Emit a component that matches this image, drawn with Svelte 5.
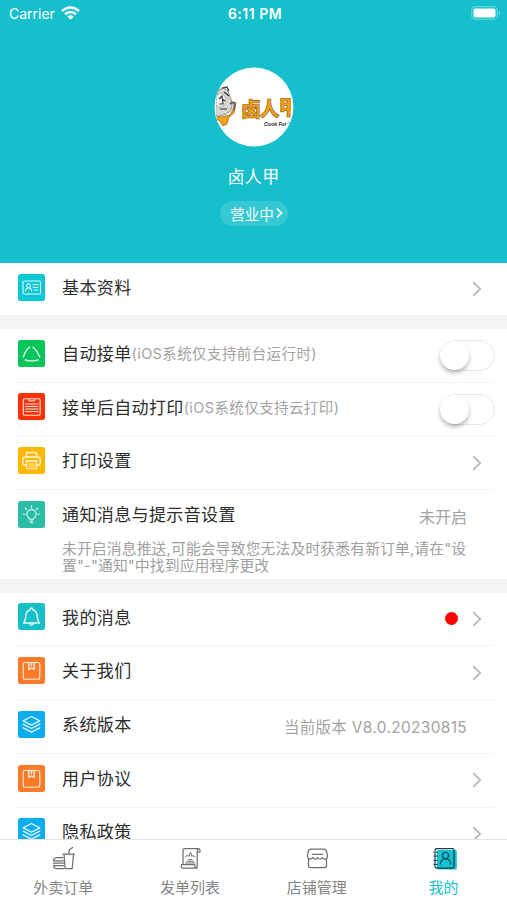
<!--
  Profile page of the merchant app: shop header, settings list, tab bar.
-->

<script lang="ts">
  type Row = {
    icon: string;
    color: string;
    label: string;
    note?: string;
    value?: string;
    desc?: string;
    dot?: boolean;
    toggle?: boolean;
    arrow?: boolean;
  };

  const groups: Row[][] = [
    [{ icon: 'card', color: '#08c8d5', label: '基本资料', arrow: true }],
    [
      { icon: 'triangle', color: '#05c45a', label: '自动接单', note: '(iOS系统仅支持前台运行时)', toggle: true },
      { icon: 'receipt', color: '#fb3203', label: '接单后自动打印', note: '(iOS系统仅支持云打印)', toggle: true },
      { icon: 'printer', color: '#ffb800', label: '打印设置', arrow: true },
      {
        icon: 'bulb',
        color: '#2bbda5',
        label: '通知消息与提示音设置',
        value: '未开启',
        desc: '未开启消息推送,可能会导致您无法及时获悉有新订单,请在"设置"-"通知"中找到应用程序更改',
      },
    ],
    [
      { icon: 'bell', color: '#17c0c8', label: '我的消息', dot: true, arrow: true },
      { icon: 'book', color: '#fd7a28', label: '关于我们', arrow: true },
      { icon: 'layers', color: '#0aaef0', label: '系统版本', value: '当前版本 V8.0.20230815' },
      { icon: 'book', color: '#fd7a28', label: '用户协议', arrow: true },
      { icon: 'layers', color: '#0aaef0', label: '隐私政策', arrow: true },
    ],
  ];

  const tabs = [
    { icon: 'food', label: '外卖订单' },
    { icon: 'list', label: '发单列表' },
    { icon: 'shop', label: '店铺管理' },
    { icon: 'mine', label: '我的', active: true },
  ];

  let switches = $state<Record<string, boolean>>({});
</script>

<div class="page">
  <header class="hero">
    <div class="status">
      <div class="carrier">
        <span>Carrier</span>
        <svg width="19" height="14" viewBox="0 0 19 14" fill="none" stroke="#fff" stroke-width="2.5">
          <path d="M1 5Q9.500-2 18 5M4 8.300Q9.500 3.800 15 8.300" />
          <path d="M9.500 13.800L6.300 10.600Q9.500 8 12.700 10.600Z" fill="#fff" stroke="none" />
        </svg>
      </div>
      <span class="clock">6:11 PM</span>
      <div class="battery-wrap">
        <svg width="30" height="14" viewBox="0 0 30 14">
          <rect x="0.700" y="0.700" width="25.600" height="12.600" rx="3.800" fill="none" stroke="#5fd6de" stroke-width="1.200" />
          <rect x="2.500" y="2.500" width="22" height="9" rx="2" fill="#fff" />
          <path d="M28 5Q30 7 28 9Z" fill="#7adfe5" />
        </svg>
      </div>
    </div>

    <svg class="avatar" width="80" height="80" viewBox="0 0 80 80">
      <defs>
        <clipPath id="round"><rect x="2.500" y="2" width="74.500" height="76" rx="30" /></clipPath>
      </defs>
      <circle cx="40" cy="40" r="39.500" fill="#fff" />
      <g clip-path="url(#round)">
        <path d="M2 48L7 50 16 48 20 40 22 35 20 46 15 50 13 57 9 59 6 54 2 52Z" fill="#f3a318" stroke="#8a5b20" stroke-width="0.700" />
        <path d="M3 25Q9 18 14 24L18 35Q19 44 12 47L2 50Z" fill="#d6d5d2" stroke="#77736f" stroke-width="0.800" />
        <path d="M3 28L8 26 12 31 11 38 6 40 2 38Z" fill="#f8f8f6" stroke="#888" stroke-width="0.500" />
        <path d="M5 32L8 29 9 37 5 37M8 32L11 34M8 21L13 20 15 24M10 25L15 29M6 42L13 42" fill="none" stroke="#333" stroke-width="1.200" />
        <path d="M16 37Q22 32 20 43" fill="none" stroke="#6e635b" stroke-width="2" />
        <g class="logo-text">
          <text x="27" y="49.500" font-size="20">卤</text>
          <text x="45.500" y="49.500" font-size="20">人</text>
          <text x="64.500" y="47.500" font-size="20">甲</text>
        </g>
        <text class="logo-sub" x="50" y="58.500">Cook For ™</text>
      </g>
    </svg>

    <div class="shop-name">卤人甲</div>
    <button class="shop-state">
      <span>营业中</span>
      <svg width="7" height="12" viewBox="0 0 7 12" fill="none" stroke="#fff" stroke-width="1.700">
        <path d="M1 1.500L5.500 6 1 10.500" />
      </svg>
    </button>
  </header>

  <main class="list">
    {#each groups as rows, g (g)}
      <section class="group">
        {#each rows as row (row.label)}
          <div class="row" class:tall={row.desc}>
            <span class="tile" style="background: {row.color}">
              <svg width="27" height="27" viewBox="0 0 27 27" class="glyph">
                {#if row.icon === 'card'}
                  <rect x="5" y="7" width="17.500" height="13" rx="1.500" />
                  <circle cx="10.500" cy="11.800" r="1.900" />
                  <path d="M7.300 17Q7.600 14 10.500 14T13.700 17M15 10.500H20M15 13.300H20M16 16H20" />
                {:else if row.icon === 'triangle'}
                  <path d="M11.500 7Q7.500 10.500 5.300 17M15 7Q19.500 11 21.800 17M7.300 20Q13.500 21.800 20 20" class="bold" />
                {:else if row.icon === 'receipt'}
                  <rect x="5.300" y="5.800" width="16.800" height="16.400" rx="1.200" />
                  <path d="M11 6V7.800H16.500V6M7.500 11H20M7.500 13.500H20M7.500 16H20M7.500 18.500H20" />
                {:else if row.icon === 'printer'}
                  <path d="M8.500 10V6.500Q8.500 5.500 9.500 5.500H17.500Q18.500 5.500 18.500 6.500V10M8.500 18H7Q4.800 18 4.800 16V12.500Q4.800 10 7.500 10H19.500Q22.200 10 22.200 12.500V16Q22.200 18 20 18H18.500M8 14H19" class="bold" />
                  <path d="M8.700 14V21.800H18.300V14M11 17H16M11 19.300H16" />
                {:else if row.icon === 'bulb'}
                  <path d="M11.500 18.300Q11.500 17.400 10 16A4.500 4.500 0 1 1 17 16Q15.500 17.400 15.500 18.300ZM12 20H15M12.300 21.700H14.700" />
                  <path d="M13.500 4.800V6.500M7.200 7.200L8.500 8.500M19.800 7.200L18.500 8.500M5 13.300H7M20 13.300H22" />
                {:else if row.icon === 'bell'}
                  <path d="M5.500 20Q7.500 18 7.800 13.500Q8 8 12 7Q12 5 13.500 5T15 7Q19 8 19.200 13.500Q19.500 18 21.500 20ZM11.500 20.500Q13.500 24 15.500 20.500" class="bold" />
                {:else if row.icon === 'book'}
                  <rect x="5.200" y="5.500" width="16.600" height="16.700" rx="2" />
                  <path d="M10.800 5.500V12.500L13.500 11 16.200 12.500V5.500M13.500 6V8.500" class="bold" />
                {:else}
                  <path d="M13.500 5.500L21.800 9.800 13.500 14.100 5.200 9.800Z" class="bold" />
                  <path d="M5.200 13.200L13.500 17.500 21.800 13.200M5.200 16.800L13.500 21.100 21.800 16.800" class="bold" />
                {/if}
              </svg>
            </span>

            <div class="body">
              <div class="line">
                <span class="label">{row.label}</span>
                {#if row.note}<span class="note">{row.note}</span>{/if}
                <span class="spacer"></span>
                {#if row.value}<span class="value" class:version={row.icon === 'layers'}>{row.value}</span>{/if}
                {#if row.dot}<span class="dot"></span>{/if}
                {#if row.toggle}
                  <button
                    class="switch"
                    class:on={switches[row.label]}
                    role="switch"
                    aria-checked={!!switches[row.label]}
                    aria-label={row.label}
                    onclick={() => (switches[row.label] = !switches[row.label])}
                  >
                    <span class="knob"></span>
                  </button>
                {/if}
                {#if row.arrow}
                  <svg class="arrow" width="10" height="16" viewBox="0 0 10 16" fill="none" stroke="#bdbdbd" stroke-width="1.900">
                    <path d="M1.300 1.300L8.200 8 1.300 14.700" />
                  </svg>
                {/if}
              </div>
              {#if row.desc}<p class="desc">{row.desc}</p>{/if}
            </div>
          </div>
        {/each}
      </section>
    {/each}
  </main>

  <nav class="tabs">
    {#each tabs as tab (tab.icon)}
      <div class="tab" class:active={tab.active}>
        <svg width="24" height="24" viewBox="0 0 24 24" class="tab-icon">
          {#if tab.icon === 'food'}
            <path d="M12 8H23.500M13 8L14.200 22.500H21.200L22.500 8M17.500 8L18.500 3.800 21.500 1.500" />
            <path d="M12 11.500H5.500Q2.500 12 2.500 14.800H12.500M2.500 17.200H12.800M2.500 19.600H12.800M2.800 19.800Q2.800 22.500 5 22.500H13" />
          {:else if tab.icon === 'list'}
            <path d="M5 18.500V4Q5 2.700 6.500 2.700H21Q19.200 3 19.200 5V19.500M19.200 6H22V4.500Q22 2.700 20.500 2.700M3.500 18.700H16.800Q16.500 22 19.300 22H5Q2.500 22 3.500 18.700ZM19.200 18V20Q19.200 22 18 22" />
            <path d="M7.500 10.500L9.500 9 11 10.500 12.500 6 14 10.500 15 9.500 17 11M10.500 13.500H14M9 15.300H15.500M7.500 17H16.500" stroke-width="1" />
          {:else if tab.icon === 'shop'}
            <path d="M5.800 3.200H19Q21 3.200 21.700 6L22.500 10Q22.500 13 20 13T17.300 11.500Q16 13.500 14.500 13T12.500 11.500Q11 13.500 9.800 13T7.500 11.500Q6.500 13 4.900 13T2.300 10L3.100 6Q3.800 3.200 5.800 3.200ZM3.500 13V19.500Q3.500 21.500 5.500 21.500H19.500Q21.500 21.500 21.500 19.500V13M7.500 8.300H17.500" />
          {:else}
            <rect x="5" y="4" width="19.800" height="19.500" rx="1.500" fill="#14c1d0" stroke="none" />
            <path d="M3 4.500V3.700Q3 2.500 4.500 2.500H20.500Q22 2.500 22 4V20.500Q22 22 20.500 22H4.500Q3 22 3 20.800V19.500M3 7.500V9M3 11.500V13M3 15.500V17M2 6H5M2 10.200H5M2 14.300H5M2 18.300H5" stroke="#173d50" />
            <circle cx="13.500" cy="9.500" r="3.100" stroke="#14566a" />
            <path d="M8.300 18Q8.700 13 13.500 12.800Q18.300 13 18.700 18" stroke="#14566a" />
          {/if}
        </svg>
        <span>{tab.label}</span>
      </div>
    {/each}
  </nav>
</div>

<style>
  :global(body) {
    margin: 0;
  }
  .page {
    display: flex;
    flex-direction: column;
    width: 507px;
    height: 900px;
    overflow: hidden;
    background: #fff;
    font-family: Inter, 'Noto Sans CJK SC', sans-serif;
  }
  button {
    border: none;
    padding: 0;
    font-family: inherit;
  }

  .hero {
    display: flex;
    flex-direction: column;
    align-items: center;
    flex-shrink: 0;
    height: 263px;
    background: #16bfcc;
    color: #fff;
  }
  .status {
    display: grid;
    grid-template-columns: 1fr auto 1fr;
    align-items: center;
    box-sizing: border-box;
    width: 100%;
    height: 27px;
    padding: 0 6px 0 9px;
    font-size: 14px;
  }
  .carrier {
    display: flex;
    align-items: center;
    gap: 6px;
  }
  .carrier svg {
    margin-bottom: 1px;
  }
  .clock {
    font-size: 14px;
    font-weight: 600;
    letter-spacing: 0.5px;
  }
  .battery-wrap {
    display: flex;
    justify-content: flex-end;
    padding-bottom: 1px;
  }
  .avatar {
    margin-top: 40px;
  }
  .logo-text {
    font-family: 'Noto Sans CJK SC', sans-serif;
    font-weight: 900;
    fill: #f59f12;
    stroke: #8a5a20;
    stroke-width: 0.6;
  }
  .logo-sub {
    font-size: 5.2px;
    font-style: italic;
    font-weight: 700;
    fill: #333;
  }
  .shop-name {
    margin-top: 17px;
    font-size: 17px;
    letter-spacing: 0.3px;
    line-height: 26px;
  }
  .shop-state {
    display: flex;
    align-items: center;
    justify-content: center;
    gap: 2px;
    box-sizing: border-box;
    width: 68px;
    height: 25px;
    margin-top: 11px;
    padding: 0 0 1px 6px;
    border-radius: 13px;
    background: #36c9d4;
    color: #fff;
    font-size: 14.5px;
  }

  .list {
    flex: 1;
    min-height: 0;
    overflow: hidden;
    background: #f4f4f4;
  }
  .group {
    margin-bottom: 14px;
    background: #fff;
  }
  .row {
    display: flex;
    align-items: flex-start;
    box-sizing: border-box;
    height: 53.7px;
    margin: 0 12px 0 14px;
    padding: 10.7px 0 0 4px;
    border-bottom: 1px solid #f5f5f5;
  }
  .row:last-child {
    border-bottom: none;
  }
  .group:first-child .row {
    height: 52px;
  }
  .row.tall {
    height: 88.7px;
  }
  .tile {
    flex-shrink: 0;
    width: 27px;
    height: 27px;
    border-radius: 2.5px;
  }
  .glyph {
    display: block;
    fill: none;
    stroke: #fff;
    stroke-width: 1.1;
    stroke-linecap: round;
    stroke-linejoin: round;
    opacity: 0.88;
  }
  .glyph .bold {
    stroke-width: 1.4;
  }
  .body {
    flex: 1;
    margin-left: 17px;
  }
  .line {
    display: flex;
    align-items: center;
    height: 27px;
    white-space: nowrap;
  }
  .label {
    margin-bottom: 1.4px;
    font-size: 17px;
    letter-spacing: 0.38px;
    color: #2c2c2c;
  }
  .note {
    margin-bottom: 1px;
    font-size: 14.5px;
    letter-spacing: 0.4px;
    color: #a3a3a3;
  }
  .spacer {
    flex: 1;
  }
  .value {
    margin: 3.4px 28px 0 0;
    font-size: 16px;
    color: #a3a3a3;
  }
  .value.version {
    margin-top: 2.6px;
    font-size: 15.4px;
    letter-spacing: 0.37px;
  }
  .dot {
    width: 13px;
    height: 13px;
    margin: 4px 14px 0 0;
    border-radius: 50%;
    background: #fe0000;
  }
  .arrow {
    margin: 4px 13px 0 0;
  }
  .switch {
    box-sizing: border-box;
    width: 55px;
    height: 31px;
    margin: 4.5px 0 0;
    border: 1.5px solid #e7e7e7;
    border-radius: 16px;
    background: #fff;
  }
  .switch.on {
    background: #16bfcc;
  }
  .knob {
    display: block;
    width: 29px;
    height: 29px;
    margin-left: -1px;
    border-radius: 50%;
    background: #fff;
    box-shadow: 0 3px 4px rgba(0, 0, 0, 0.28);
  }
  .switch.on .knob {
    margin-left: 24px;
  }
  .desc {
    width: 410px;
    margin: 13.6px 0 0;
    font-size: 14.8px;
    letter-spacing: 0.14px;
    line-height: 17px;
    color: #a0a0a0;
  }

  .tabs {
    display: grid;
    grid-template-columns: repeat(4, 1fr);
    flex-shrink: 0;
    box-sizing: border-box;
    height: 61px;
    border-top: 1.5px solid #e3e3e3;
    background: #fff;
  }
  .tab {
    display: flex;
    flex-direction: column;
    align-items: center;
    padding-top: 6px;
    font-size: 15px;
    line-height: 22px;
    color: #858585;
  }
  .tab > span {
    margin-top: 7px;
  }
  .tab.active {
    color: #16bfd0;
  }
  .tab-icon {
    overflow: visible;
    fill: none;
    stroke: #707070;
    stroke-width: 1.25;
    stroke-linecap: round;
    stroke-linejoin: round;
  }
</style>
